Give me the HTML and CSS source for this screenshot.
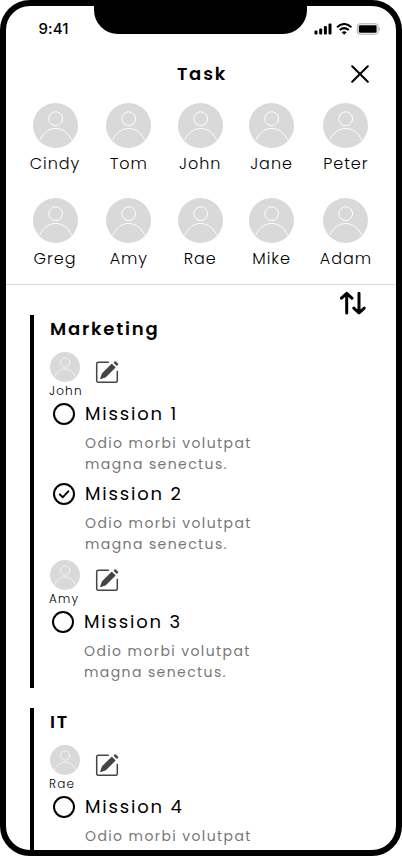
FILE: index.html
```html
<!DOCTYPE html>
<html lang="en">
<head>
<meta charset="utf-8">
<title>Task</title>
<link rel="stylesheet" href="styles.css">
</head>
<body>
<svg class="defs" width="0" height="0" aria-hidden="true">
  <symbol id="avatar" viewBox="0 0 45 45">
    <circle cx="22.5" cy="22.5" r="22.5" fill="#d9d9d9"/>
    <g fill="none" stroke="#fff" stroke-linecap="round">
      <circle cx="22.7" cy="15.7" r="6.9"/>
      <path d="M7 36.700C10.200 29.500 16.300 25.500 22.700 25.500S35.300 29.500 38.500 36.700"/>
    </g>
  </symbol>
  <symbol id="edit" viewBox="0 0 24 24">
    <path d="M13.300 2.200H3.200Q1.700 2.200 1.700 3.700V20.800Q1.700 22.300 3.200 22.300H20.800Q22.300 22.300 22.300 20.800V11.500" fill="none" stroke="#444" stroke-width="1.500" stroke-linecap="round"/>
    <path d="M5.800 18.500L7.500 13.600L16.800 4.300L19.900 7.400L10.700 16.700Z" fill="#444" stroke="#444" stroke-width="1.200" stroke-linejoin="round"/>
    <path d="M18.500 2.700L19.800 1.400Q20.300 1 20.800 1.400L23.100 3.700Q23.500 4.200 23.100 4.700L21.800 6Z" fill="#444"/>
  </symbol>
  <symbol id="open" viewBox="0 0 22 22"><circle cx="11" cy="11" r="10" fill="none" stroke="#000" stroke-width="2"/></symbol>
  <symbol id="done" viewBox="0 0 22 22">
    <circle cx="11" cy="11" r="10" fill="none" stroke="#000" stroke-width="2"/>
    <path d="M6.700 11.400L9.700 14.300L15.300 8.300" fill="none" stroke="#000" stroke-width="1.900" stroke-linecap="round" stroke-linejoin="round"/>
  </symbol>
</svg>
<main class="phone">
  <div class="notch"></div>
  <div class="status">
    <span class="time">9:41</span>
    <svg class="signals" viewBox="0 0 66 12">
      <rect x="0.500" y="7.500" width="3" height="4" rx="1"/>
      <rect x="5.200" y="5.500" width="3" height="6" rx="1"/>
      <rect x="9.900" y="3" width="3" height="8.500" rx="1"/>
      <rect x="14.500" y=".5" width="3" height="11" rx="1"/>
      <g fill="none" stroke="#000" stroke-width="2"><path d="M23 4.200Q30.200-2.200 37.400 4.200M25.600 7.100Q30.200 3.200 34.800 7.100"/></g>
      <path d="M27.700 9.300Q30.200 7.300 32.700 9.300L30.200 11.800Z"/>
      <rect x="43.300" y=".8" width="20.800" height="10.400" rx="2.500" fill="none" stroke="#aaa"/>
      <rect x="44.800" y="2.300" width="17.800" height="7.400" rx="1.300"/>
      <path d="M65 4.200Q67 6 65 7.800Z" fill="#aaa"/>
    </svg>
  </div>
  <header class="header">
    <h1>Task</h1>
    <svg class="close" viewBox="0 0 18 18"><path d="M1.200 1.200L16.800 16.800M16.800 1.200L1.200 16.800" fill="none" stroke="#000" stroke-width="2" stroke-linecap="round"/></svg>
  </header>
  <section class="people">
    <div class="person"><svg><use href="#avatar"/></svg><span>Cindy</span></div>
    <div class="person"><svg><use href="#avatar"/></svg><span>Tom</span></div>
    <div class="person"><svg><use href="#avatar"/></svg><span>John</span></div>
    <div class="person"><svg><use href="#avatar"/></svg><span>Jane</span></div>
    <div class="person"><svg><use href="#avatar"/></svg><span>Peter</span></div>
    <div class="person"><svg><use href="#avatar"/></svg><span>Greg</span></div>
    <div class="person"><svg><use href="#avatar"/></svg><span>Amy</span></div>
    <div class="person"><svg><use href="#avatar"/></svg><span>Rae</span></div>
    <div class="person"><svg><use href="#avatar"/></svg><span>Mike</span></div>
    <div class="person"><svg><use href="#avatar"/></svg><span>Adam</span></div>
  </section>
  <div class="toolbar">
    <svg class="sort" viewBox="0 0 26 24"><path d="M6.700 22V2.700M1.500 7.200L6.700 2.300L11.900 7.200M19 2.300V21.600M13.800 17.100L19 22L24.200 17.100" fill="none" stroke="#000" stroke-width="3" stroke-linecap="round" stroke-linejoin="round"/></svg>
  </div>
  <section class="group">
    <h2>Marketing</h2>
    <div class="owner"><div class="who"><svg class="face"><use href="#avatar"/></svg><span>John</span></div><svg class="edit"><use href="#edit"/></svg></div>
    <article class="task">
      <svg class="check"><use href="#open"/></svg><h3>Mission 1</h3>
      <p>Odio morbi volutpat<br>magna senectus.</p>
    </article>
    <article class="task">
      <svg class="check"><use href="#done"/></svg><h3>Mission 2</h3>
      <p>Odio morbi volutpat<br>magna senectus.</p>
    </article>
    <div class="owner"><div class="who"><svg class="face"><use href="#avatar"/></svg><span>Amy</span></div><svg class="edit"><use href="#edit"/></svg></div>
    <article class="task outdent">
      <svg class="check"><use href="#open"/></svg><h3>Mission 3</h3>
      <p>Odio morbi volutpat<br>magna senectus.</p>
    </article>
  </section>
  <section class="group last">
    <h2>IT</h2>
    <div class="owner"><div class="who"><svg class="face"><use href="#avatar"/></svg><span>Rae</span></div><svg class="edit"><use href="#edit"/></svg></div>
    <article class="task">
      <svg class="check"><use href="#open"/></svg><h3>Mission 4</h3>
      <p>Odio morbi volutpat</p>
    </article>
  </section>
</main>
</body>
</html>
```
FILE: styles.css
```css
* { box-sizing: border-box; margin: 0; padding: 0; }
body { background: #fff; overflow: hidden; }
svg { display: block; flex: none; }
.defs { position: absolute; }
.phone {
  position: relative;
  width: 402px;
  height: 856px;
  border: 6px solid #000;
  border-radius: 30px;
  background: #fff;
  overflow: hidden;
  font-family: Poppins, Inter, sans-serif;
  color: #000;
}
.notch {
  position: absolute;
  top: -1px;
  left: 88.300px;
  width: 212.700px;
  height: 29px;
  border-radius: 0 0 24px 24px;
  background: #000;
}
.status {
  display: flex;
  justify-content: space-between;
  align-items: center;
  height: 46px;
  padding: 0 16.500px 0 32.500px;
}
.time { font: 500 15px/18px Inter, sans-serif; letter-spacing: .1px; }
.signals { width: 66px; height: 12px; }
.header {
  display: flex;
  align-items: center;
  justify-content: flex-end;
  height: 44px;
  padding-right: 27px;
}
.header h1 {
  flex: 1;
  padding: 0 0 2px 31px;
  margin-right: -16px;
  text-align: center;
  font-size: 18px;
  font-weight: 600;
  line-height: 27px;
  letter-spacing: 1.800px;
}
.close { width: 18px; height: 18px; }
.people {
  display: grid;
  grid-template-columns: 50px 45px 45px 45px 51px;
  column-gap: 26.350px;
  grid-auto-rows: 95px;
  height: 189px;
  padding: 7px 0 0 24px;
  border-bottom: 1px solid #d9d9d9;
}
.person { display: flex; flex-direction: column; align-items: center; }
.person svg { width: 45px; height: 45px; }
.person span {
  margin: 3.500px -10px 0;
  font-size: 16px;
  font-weight: 300;
  line-height: 24px;
  letter-spacing: .960px;
}
.toolbar {
  display: flex;
  justify-content: flex-end;
  height: 30px;
  padding: 6px 30px 0 0;
}
.sort { width: 26px; height: 24px; }
.group {
  margin: 0 0 20px 24px;
  padding-left: 16px;
  border-left: 4px solid #000;
}
.group.last { height: 142px; margin-bottom: 0; }
.group h2 {
  font-size: 18px;
  font-weight: 600;
  line-height: 27px;
  letter-spacing: 1.800px;
  margin-bottom: 10px;
}
.owner { display: flex; gap: 15px; height: 48px; }
.who { width: 30px; }
.face { width: 30px; height: 30px; }
.who span {
  display: block;
  margin-left: -1px;
  font-size: 12px;
  font-weight: 300;
  line-height: 18px;
  letter-spacing: 1.200px;
  white-space: nowrap;
}
.edit { width: 24px; height: 24px; margin-top: 8px; }
.task {
  display: grid;
  grid-template-columns: 22px 1fr;
  column-gap: 10px;
  row-gap: 6px;
  align-items: center;
  padding: 0 0 5px 3px;
}
.task.outdent { padding-left: 2px; }
.check { width: 22px; height: 22px; }
.task h3 {
  font-size: 18px;
  font-weight: 400;
  line-height: 27px;
  letter-spacing: 1.800px;
}
.task p {
  grid-column: 2;
  font-size: 14px;
  line-height: 21px;
  letter-spacing: 1.400px;
  color: #777;
}
```
